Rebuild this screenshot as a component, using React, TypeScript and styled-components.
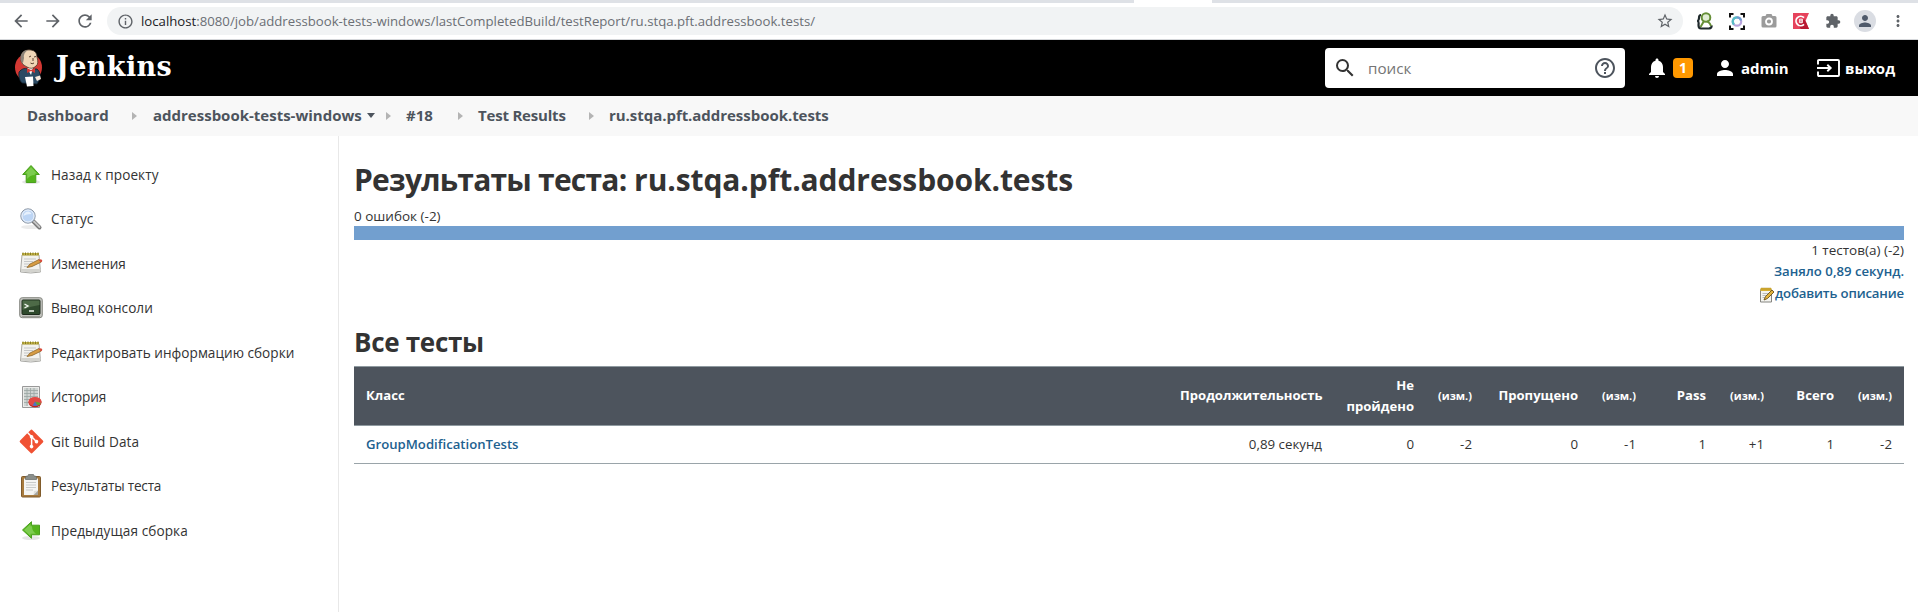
import React from 'react';
import styled, { createGlobalStyle } from 'styled-components';
import {
  MdArrowBack, MdArrowForward, MdRefresh, MdInfoOutline, MdStarBorder, MdExtension, MdPerson,
  MdMoreVert, MdNotifications, MdSearch, MdHelpOutline,
} from 'react-icons/md';
import { FaGitAlt } from 'react-icons/fa';

const GlobalStyle = createGlobalStyle`
  * { box-sizing: border-box; }
  body {
    margin: 0;
    background: #fff;
    color: #333;
    font-family: "Open Sans", "Noto Sans", sans-serif;
    font-size: 13.5px;
    line-height: 21px;
  }
  svg { display: block; flex: none; }
`;

const Page = styled.div`
  display: flex;
  flex-direction: column;
  height: 612px;
  overflow: hidden;
`;

/* Browser chrome */
const TabStrip = styled.div`
  height: 3px;
  background: #dee1e6;
  padding-left: 1134px;
`;
const ActiveTab = styled.div`
  width: 78px;
  height: 3px;
  background: #fff;
`;
const Toolbar = styled.div`
  display: flex;
  align-items: center;
  height: 37px;
  padding: 0 11px;
  border-bottom: 1px solid #d5d7da;
  color: #5f6368;
`;
const NavButtons = styled.div`
  display: flex;
  gap: 12px;
  width: 96px;
`;
const AddressBar = styled.div`
  display: flex;
  align-items: center;
  width: 1576px;
  height: 28px;
  padding: 0 9px 0 10px;
  border-radius: 14px;
  background: #f1f3f4;
`;
const Url = styled.span`
  flex: 1;
  margin-left: 7px;
  font-size: 13.2px;
  color: #6b6f74;
  b { font-weight: 400; color: #202124; }
`;
const Extensions = styled.div`
  display: flex;
  align-items: center;
  gap: 16px;
  margin-left: 14px;
`;
const Avatar = styled.div`
  display: grid;
  place-items: center;
  width: 22px;
  height: 22px;
  margin: 0 -3px;
  border-radius: 50%;
  background: #dadde3;
  color: #4f5a6b;
`;

/* Application header */
const Header = styled.header`
  display: flex;
  align-items: center;
  flex: none;
  height: 56px;
  padding: 0 23px 0 14px;
  background: #000;
  color: #fff;
  font-size: 15px;
  font-weight: 700;
`;
const Brand = styled.span`
  flex: 1;
  margin: -2px 0 0 13px;
  font-family: "DejaVu Serif", serif;
  font-size: 27px;
  line-height: 32px;
  letter-spacing: 0.4px;
`;
const SearchBox = styled.div`
  display: flex;
  align-items: center;
  width: 300px;
  height: 40px;
  padding: 0 8px;
  border-radius: 4px;
  background: #fff;
  color: #333;
`;
const Placeholder = styled.span`
  flex: 1;
  margin: 0 0 0 11px;
  font-size: 15.2px;
  font-weight: 400;
  color: #757575;
`;
const HeaderItem = styled.div<{ $width: number; $gap: number; $before: number }>`
  display: flex;
  align-items: center;
  gap: ${p => p.$gap}px;
  width: ${p => p.$width}px;
  margin-left: ${p => p.$before}px;
  white-space: nowrap;
`;
const Badge = styled.span`
  width: 20px;
  height: 20px;
  border-radius: 4px;
  background: #ff9800;
  font-size: 14px;
  line-height: 20px;
  text-align: center;
`;

/* Breadcrumbs */
const Crumbs = styled.nav`
  display: flex;
  align-items: center;
  flex: none;
  height: 40px;
  padding: 0 0 1px 27px;
  background: #f8f8f8;
  color: #4d545d;
  font-size: 15px;
  font-weight: 700;
`;
const Crumb = styled.span<{ $width: number; $spacing?: number }>`
  width: ${p => p.$width}px;
  letter-spacing: ${p => p.$spacing ?? 0}px;
  white-space: nowrap;
`;
const Separator = styled.i<{ $before: number; $after: number }>`
  margin: 0 ${p => p.$after}px 0 ${p => p.$before}px;
  border: 4px solid transparent;
  border-left: 5px solid #b4b4b4;
  border-right: 0;
`;
const Caret = styled.i`
  margin-left: 4px;
  border: 4px solid transparent;
  border-top: 5px solid #4d545d;
  border-bottom: 0;
`;

/* Body */
const Body = styled.div`
  display: flex;
  flex: 1;
`;
const Sidebar = styled.aside`
  width: 339px;
  padding: 16px 0 0 19px;
  border-right: 1px solid #e8e8e8;
`;
const Task = styled.div<{ $spacing: number }>`
  display: flex;
  align-items: center;
  gap: 8px;
  height: 44.5px;
  font-size: 13.6px;
  font-weight: 500;
  letter-spacing: ${p => p.$spacing}px;
`;
const Main = styled.main`
  flex: 1;
  padding: 24px 14px 0 15px;
`;
const Title = styled.h1`
  margin: 0;
  font-size: 30px;
  line-height: 39px;
  letter-spacing: -0.1px;
`;
const TitleLead = styled.span`
  letter-spacing: -0.78px;
`;
const Failures = styled.div`
  margin-top: 7px;
  line-height: 20px;
`;
const ResultBar = styled.div`
  height: 14px;
  background: #729fcf;
`;
const Summary = styled.div`
  display: flex;
  flex-direction: column;
  align-items: flex-end;
  line-height: 21.3px;
`;
const SummaryLink = styled.span<{ $spacing?: number }>`
  display: flex;
  align-items: center;
  color: #21618f;
  font-size: 13.2px;
  font-weight: 600;
  letter-spacing: ${p => p.$spacing ?? 0}px;
`;
const NoteIcon = styled.svg`
  margin: 3px 0 0;
`;
const Subtitle = styled.h2`
  margin: 22px 0 8px;
  font-size: 26px;
  line-height: 32px;
  letter-spacing: -0.3px;
`;
const Table = styled.table`
  width: 1550px;
  table-layout: fixed;
  border-collapse: separate;
  border-spacing: 0;
  border-top: 1px solid #8f9aa0;
`;
const HeadCell = styled.th<{ $left?: boolean; $small?: boolean }>`
  height: 59px;
  padding: 0 12px;
  border-bottom: 1px solid #8f9aa0;
  background: #4d545d;
  color: #fff;
  font-size: ${p => (p.$small ? 11 : 13.1)}px;
  line-height: 21px;
  text-align: ${p => (p.$left ? 'left' : 'right')};
`;
const Cell = styled.td<{ $left?: boolean }>`
  height: 38px;
  padding: 1px 12px 0;
  border-bottom: 1px solid #9aa4a9;
  font-size: 13.3px;
  text-align: ${p => (p.$left ? 'left' : 'right')};
`;
const ClassLink = styled.span`
  color: #21618f;
  font-size: 13.15px;
  font-weight: 600;
`;

const JenkinsLogo = () => (
  <svg width="29" height="38" viewBox="0 0 29 38">
    <ellipse cx="14.5" cy="18.5" rx="13.5" ry="14" fill="#d33833" />
    <path d="M5 23Q9 18 14 20L23 20Q27 23 26 30L23 35L8 34Q4 30 5 23Z" fill="#2b4a63" stroke="#10202c" strokeWidth=".8" />
    <path d="M13 19L17 26L19 19Z" fill="#fff" />
    <path d="M7 6Q10 0 17 1Q23 2 23 8Q25 15 22 17Q18 21 13 18Q8 16 7 12Z" fill="#f0d6b7" stroke="#3a2b20" strokeWidth=".7" />
    <path d="M7 6Q9 1 14 1Q9 4 10 9L9 14Q5 11 7 6Z" fill="#8d8378" />
    <path d="M15 8l2-1M20 8l2-.5M16.500 14Q18 15.500 20 14M19 9v3" stroke="#5a4030" strokeWidth="1" fill="none" />
    <path d="M13 19L17 21L21 19L21 24L17 22L13 24Z" fill="#d33833" />
    <path d="M11 28L19 27.500L19.500 37L13 37.500Z" fill="#fff" />
    <path d="M21 28L26 26.500L27 30L23 32Z" fill="#f5e6da" />
  </svg>
);

const ExitIcon = () => (
  <svg width="23" height="18" viewBox="0 0 23 18" fill="none" stroke="#fff" strokeWidth="1.9">
    <path d="M1 5.500V2Q1 1 2 1H21Q22 1 22 2V16Q22 17 21 17H2Q1 17 1 16V12.500M0 9H13.500M10.300 5.700L13.700 9L10.300 12.300" />
  </svg>
);

const PersonLensIcon = () => (
  <svg width="16" height="18" viewBox="0 0 16 18" fill="none">
    <path d="M4 3Q2 3 2 6Q2 8 .8 9Q2 10 1.500 13Q1.500 16.500 4 16.500H12Q15 16 14.500 13.500" stroke="#202a2d" strokeWidth="2.200" />
    <circle cx="9" cy="5.500" r="4.300" fill="#e1edd5" stroke="#668f37" strokeWidth="2" />
    <path d="M7 9L3.500 15M10 9Q13 11 14 14" stroke="#668f37" strokeWidth="2" />
  </svg>
);
const CaptureIcon = () => (
  <svg width="16" height="17" viewBox="0 0 16 17" fill="none">
    <path d="M1 4.500V1H4.500M11.500 1H15V4.500M15 12.500V16H11.500M4.500 16H1V12.500" stroke="#111" strokeWidth="2" />
    <circle cx="8" cy="8.500" r="4.200" stroke="#b8a4dc" strokeWidth="2.200" />
    <path d="M8 4.300A4.200 4.200 0 0 0 5 11.500" stroke="#57bdc6" strokeWidth="2.200" />
    <path d="M8 4.300A4.200 4.200 0 0 1 12 7.500" stroke="#6d9dcf" strokeWidth="2.200" />
  </svg>
);
const CameraIcon = () => (
  <svg width="16" height="14" viewBox="0 0 16 14">
    <path d="M2 2H4.500L5.500 0H10.500L11.500 2H14Q15.500 2 15.500 3.500V12Q15.500 13.500 14 13.500H2Q.5 13.500 .5 12V3.500Q.5 2 2 2Z" fill="#9b9b9b" />
    <circle cx="8" cy="7.500" r="3" fill="none" stroke="#fff" strokeWidth="1.800" />
  </svg>
);
const RedExtensionIcon = () => (
  <svg width="16" height="16" viewBox="0 0 16 16">
    <path d="M0 0H16L12.500 8L16 16H0Z" fill="#e6435c" />
    <path d="M5 12L11 6L13 9L16 16H8Z" fill="#b81832" />
    <path d="M11 4.600A4.700 4.700 0 1 0 11 11.400" fill="none" stroke="#fff" strokeWidth="1.800" />
    <rect x="6.200" y="5.700" width="3.600" height="4.600" rx="1" fill="#fff" />
    <path d="M7.300 7H8.600M7.300 8.800H8.600" stroke="#c01c35" strokeWidth=".9" />
  </svg>
);

const ArrowIcon = ({ left }: { left?: boolean }) => (
  <svg width="24" height="24" viewBox="0 0 24 24">
    <ellipse cx="12" cy="20" rx="9" ry="2" fill="#000" opacity=".1" />
    <g transform={left ? 'rotate(-90 12 12)' : undefined}>
      <path d="M12 3.500L20.300 12.500H16.800V20.500H7.200V12.500H3.700Z" fill="#55b51d" stroke="#4aa01d" />
      <path d="M12 5L18 11.500H15.800V13Q11 13 8.200 17V11.500H6Z" fill="#8bd460" opacity=".75" />
    </g>
  </svg>
);
const LensIcon = () => (
  <svg width="24" height="24" viewBox="0 0 24 24">
    <ellipse cx="12" cy="20" rx="10" ry="2" fill="#000" opacity=".08" />
    <path d="M14.500 14.500L20.500 20.500" stroke="#787878" strokeWidth="4" strokeLinecap="round" />
    <path d="M15 14.500L20.500 20" stroke="#c7c7c7" strokeWidth="1.800" strokeLinecap="round" />
    <circle cx="9" cy="9" r="7.200" fill="#b9d2f1" stroke="#8f98a4" />
    <circle cx="9" cy="9" r="6" fill="#bdd5f4" stroke="#eef3fa" strokeWidth="1" />
    <path d="M4.500 9Q5 4.500 9.500 4.500Q12 5 12.500 7Q7 7 4.500 9Z" fill="#e6f0fc" />
  </svg>
);
const NotepadIcon = () => (
  <svg width="24" height="24" viewBox="0 0 24 24">
    <path d="M3 4H20L21.500 21Q12 23 1.500 21Z" fill="#f2f2ef" stroke="#a9a9a5" />
    <path d="M2 18H21.500V20.500Q12 22 2 20.500Z" fill="#d3d3ce" />
    <path d="M3 2H20V4.500H3Z" fill="#c6b648" />
    <path d="M4 1.500V4M6.500 1.500V4M9 1.500V4M11.500 1.500V4M14 1.500V4M16.500 1.500V4M19 1.500V4" stroke="#857a25" />
    <path d="M5 8H17M5 10.500H14M5 13H11M5 15.500H9" stroke="#c5c7c8" />
    <path d="M8 16.500L11 13L20 8.500L22.300 11L13 15.500Z" fill="#d79c43" stroke="#8c6428" strokeWidth=".8" />
    <path d="M19.500 8.800L22 8.200Q24 9 23 10.700L21.800 11.200Z" fill="#d84d3d" />
  </svg>
);
const ConsoleIcon = () => (
  <svg width="24" height="24" viewBox="0 0 24 24">
    <rect x=".7" y="1.700" width="22.600" height="20" rx="2.500" fill="#c4c5c0" stroke="#858780" />
    <rect x="3" y="4" width="18" height="14.500" rx="1" fill="#2f4a2d" stroke="#1c2a1b" />
    <path d="M3.500 4.500H20.500V9Q12 10 3.500 14Z" fill="#5a7752" opacity=".7" />
    <path d="M5.500 8L9 10L5.500 12M10 15H15" stroke="#f2f7ef" strokeWidth="1.400" fill="none" />
    <path d="M3 20.500H21" stroke="#9a9b94" />
  </svg>
);
const HistoryIcon = () => (
  <svg width="24" height="24" viewBox="0 0 24 24">
    <path d="M3.500 1.500H20.500V22.500H3.500Z" fill="#ececea" stroke="#999" />
    <path d="M5 3H19V15H9V21H5Z" fill="#cfd4d2" />
    <path d="M5 5.500H19M5 8.500H19M5 11.500H19M5 14.500H12M5 17.500H10M8 3V21M11.500 3V15M15 3V12" stroke="#9ba6a2" strokeWidth=".8" />
    <ellipse cx="16" cy="17.500" rx="6.500" ry="4.800" fill="#bf2020" />
    <ellipse cx="16" cy="16.500" rx="6.500" ry="4.500" fill="#e24a43" />
    <path d="M16 16.500L13.500 20.600Q16 21.500 18.500 20.600Z" fill="#4b75c4" />
    <path d="M16 16.500L18.500 20.600Q21 20 22 18Z" fill="#5fa43a" />
  </svg>
);
const ClipboardIcon = () => (
  <svg width="24" height="24" viewBox="0 0 24 24">
    <rect x="2.500" y="2.500" width="19" height="20.500" rx="1" fill="#a87b3e" stroke="#805b2b" />
    <path d="M5 4.500H19V21H5Z" fill="#f5f5f3" />
    <path d="M7 8.500H17M7 11H17M7 13.500H17M7 16H14" stroke="#c9cbca" />
    <path d="M19 16.500L14.500 21H19Z" fill="#a5a5a0" />
    <path d="M14.500 21L15 17L19 16.500Z" fill="#dfdfdb" />
    <path d="M6.500 5.500V3Q6.500 2 9 2L9.500 .5H14.500L15 2Q17.500 2 17.500 3V5.500Z" fill="#8b8f8b" stroke="#666a67" strokeWidth=".7" />
  </svg>
);

const GitIcon = styled(FaGitAlt)`
  margin: 0 -1.5px;
`;

const tasks: { label: string; icon: React.ReactNode; spacing: number }[] = [
  { label: 'Назад к проекту', icon: <ArrowIcon />, spacing: 0.08 },
  { label: 'Статус', icon: <LensIcon />, spacing: 0 },
  { label: 'Изменения', icon: <NotepadIcon />, spacing: -0.1 },
  { label: 'Вывод консоли', icon: <ConsoleIcon />, spacing: 0.03 },
  { label: 'Редактировать информацию сборки', icon: <NotepadIcon />, spacing: 0.02 },
  { label: 'История', icon: <HistoryIcon />, spacing: -0.1 },
  { label: 'Git Build Data', icon: <GitIcon size={27} color="#f05133" />, spacing: 0.05 },
  { label: 'Результаты теста', icon: <ClipboardIcon />, spacing: -0.23 },
  { label: 'Предыдущая сборка', icon: <ArrowIcon left />, spacing: 0.1 },
];

const columns: { label: string; width: number; small?: boolean }[] = [
  { label: 'Продолжительность', width: 166 },
  { label: 'Не пройдено', width: 92 },
  { label: '(изм.)', width: 58, small: true },
  { label: 'Пропущено', width: 106 },
  { label: '(изм.)', width: 58, small: true },
  { label: 'Pass', width: 70 },
  { label: '(изм.)', width: 58, small: true },
  { label: 'Всего', width: 70 },
  { label: '(изм.)', width: 58, small: true },
];
const values = ['0,89 секунд', '0', '-2', '0', '-1', '1', '+1', '1', '-2'];

export default function App() {
  return (
    <Page>
      <GlobalStyle />
      <TabStrip><ActiveTab /></TabStrip>
      <Toolbar>
        <NavButtons>
          <MdArrowBack size={20} />
          <MdArrowForward size={20} />
          <MdRefresh size={20} />
        </NavButtons>
        <AddressBar>
          <MdInfoOutline size={17} />
          <Url><b>localhost</b>:8080/job/addressbook-tests-windows/lastCompletedBuild/testReport/ru.stqa.pft.addressbook.tests/</Url>
          <MdStarBorder size={18} />
        </AddressBar>
        <Extensions>
          <PersonLensIcon />
          <CaptureIcon />
          <CameraIcon />
          <RedExtensionIcon />
          <MdExtension size={16} />
          <Avatar><MdPerson size={18} /></Avatar>
          <MdMoreVert size={18} />
        </Extensions>
      </Toolbar>
      <Header>
        <JenkinsLogo />
        <Brand>Jenkins</Brand>
        <SearchBox>
          <MdSearch size={24} />
          <Placeholder>поиск</Placeholder>
          <MdHelpOutline size={24} color="#4d545d" />
        </SearchBox>
        <HeaderItem $width={48} $gap={4} $before={20}>
          <MdNotifications size={24} />
          <Badge>1</Badge>
        </HeaderItem>
        <HeaderItem $width={75} $gap={4} $before={20}>
          <MdPerson size={24} />
          admin
        </HeaderItem>
        <HeaderItem $width={78} $gap={5} $before={29}>
          <ExitIcon />
          выход
        </HeaderItem>
      </Header>
      <Crumbs>
        <Crumb $width={81}>Dashboard</Crumb>
        <Separator $before={24} $after={16} />
        <Crumb $width={210}>addressbook-tests-windows</Crumb>
        <Caret />
        <Separator $before={11} $after={15} />
        <Crumb $width={28}>#18</Crumb>
        <Separator $before={24} $after={15} />
        <Crumb $width={88} $spacing={-0.2}>Test Results</Crumb>
        <Separator $before={23} $after={15} />
        <Crumb $width={221} $spacing={-0.04}>ru.stqa.pft.addressbook.tests</Crumb>
      </Crumbs>
      <Body>
        <Sidebar>
          {tasks.map(t => (
            <Task key={t.label} $spacing={t.spacing}>{t.icon}{t.label}</Task>
          ))}
        </Sidebar>
        <Main>
          <Title><TitleLead>Результаты теста:</TitleLead> ru.stqa.pft.addressbook.tests</Title>
          <Failures>0 ошибок (-2)</Failures>
          <ResultBar />
          <Summary>
            <span>1 тестов(а) (-2)</span>
            <SummaryLink>Заняло 0,89 секунд.</SummaryLink>
            <SummaryLink $spacing={-0.15}>
              <NoteIcon width="16" height="16" viewBox="0 0 16 16">
                <path d="M1.500 2.500H12.500V15H1.500Z" fill="#f4f4f0" stroke="#858580" />
                <path d="M1.500 1H12.500V4H1.500Z" fill="#e3bd3d" />
                <path d="M3 .5V3.500M5 .5V3.500M7 .5V3.500M9 .5V3.500M11 .5V3.500" stroke="#a47d16" strokeWidth=".8" />
                <path d="M3.500 6.500H9M3.500 8.500H7M3.500 10.500H6" stroke="#b9bcbc" />
                <path d="M5 13L6.500 9.500L13 3L15 5L8.500 11.500Z" fill="#e0b23d" stroke="#6a501c" strokeWidth=".9" />
              </NoteIcon>
              добавить описание
            </SummaryLink>
          </Summary>
          <Subtitle>Все тесты</Subtitle>
          <Table>
            <colgroup>
              <col />
              {columns.map((c, i) => <col key={i} width={c.width} />)}
            </colgroup>
            <thead>
              <tr>
                <HeadCell $left>Класс</HeadCell>
                {columns.map((c, i) => <HeadCell key={i} $small={c.small}>{c.label}</HeadCell>)}
              </tr>
            </thead>
            <tbody>
              <tr>
                <Cell $left><ClassLink>GroupModificationTests</ClassLink></Cell>
                {values.map((v, i) => <Cell key={i}>{v}</Cell>)}
              </tr>
            </tbody>
          </Table>
        </Main>
      </Body>
    </Page>
  );
}
